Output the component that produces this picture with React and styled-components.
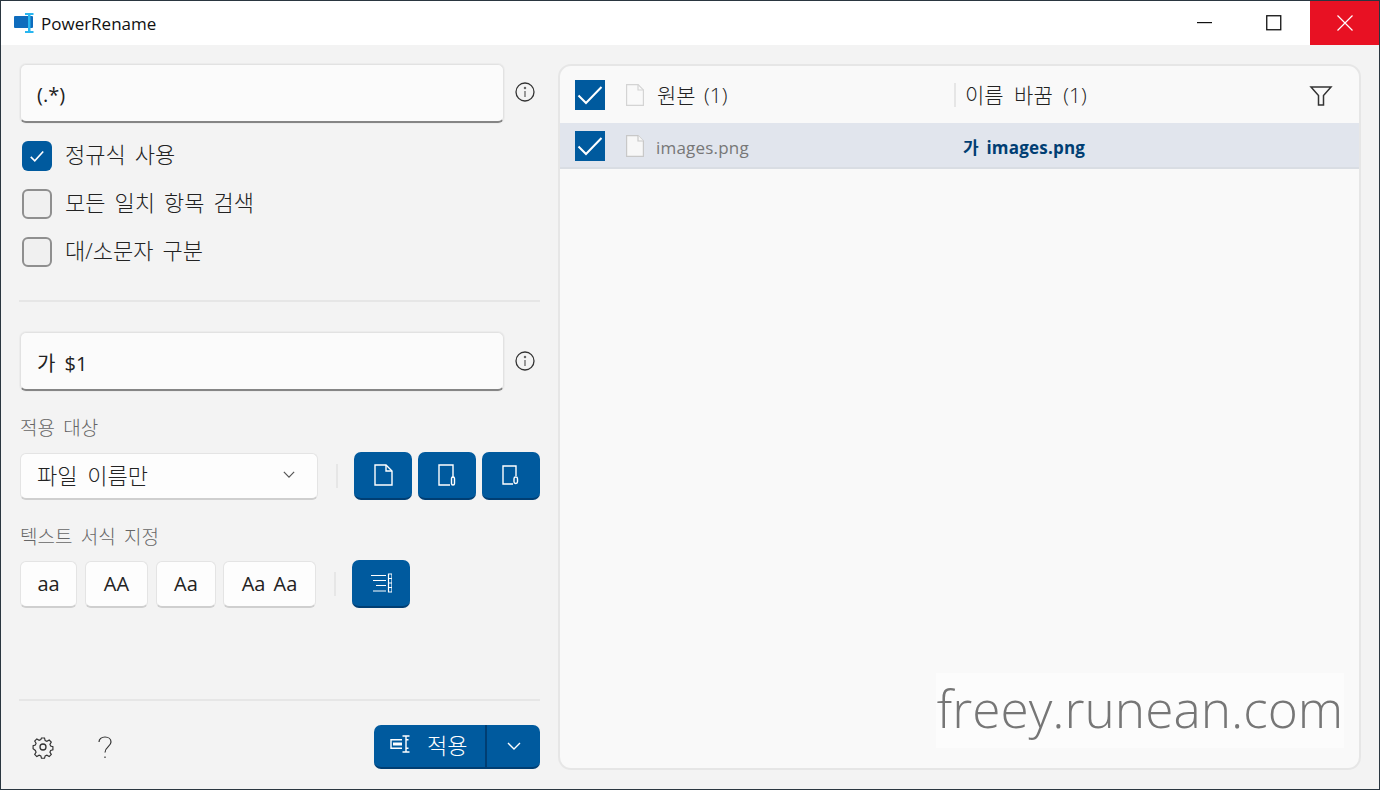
import React from "react";
import styled, { createGlobalStyle } from "styled-components";

const Global = createGlobalStyle`
  html, body { margin: 0; padding: 0; background: #f3f3f3; }
  * { box-sizing: border-box; }
  body { font-family: "Open Sans", "Noto Sans CJK KR", sans-serif; color: #1b1b1b; overflow: hidden; }
`;

const Win = styled.div`
  width: 1380px; height: 790px; display: flex; flex-direction: column;
  border: 1px solid #2a3640; background: #f3f3f3;
`;
const TitleBar = styled.header`
  height: 44px; flex: none; background: #fff; display: flex; align-items: center; padding-left: 12px;
`;
const AppTitle = styled.span`
  font-size: 17px; margin-left: 6px; flex: 1; color: #111; line-height: 44px; margin-top: 1px;
`;
const WinBtn = styled.div`
  width: ${p => p.$w}px; height: 44px; display: flex; align-items: center; justify-content: center;
  padding-right: ${p => p.$pad || 0}px;
  background: ${p => p.$close ? "#e81123" : "transparent"};
`;
const Main = styled.main`flex: 1; display: flex; min-height: 0;`;
const Left = styled.section`
  width: 557px; padding: 19px 0 20px 19px; display: flex; flex-direction: column; flex: none;
`;
const InputRow = styled.div`display: flex; align-items: flex-start;`;
const Field = styled.div`
  width: 484px; height: 59px; background: #fbfbfb; border: 1px solid #e2e2e2; border-bottom: 2px solid #858585;
  border-radius: 6px; display: flex; align-items: center; padding: 2px 0 0 16px; font-size: 20px; color: #222;
  word-spacing: 4px;
  box-shadow: 0 0 0 1px #ececec;
`;
const InfoWrap = styled.div`width: 20px; margin: ${p => p.$top}px 0 0 11px; height: 20px;`;
const Checks = styled.div`margin: 8px 0 0 2px;`;
const CheckRow = styled.label`
  display: flex; align-items: center; height: 48px; font-size: 22px; word-spacing: 3.300px; color: #222; font-weight: 300;
`;
const CheckText = styled.span`margin-bottom: 4px;`;
const CheckBox = styled.span`
  width: 30px; height: 30px; border-radius: 6px; flex: none; margin: 2px 13px 0 0; display: flex; align-items: center; justify-content: center;
  background: ${p => p.$on ? "#005a9e" : "#f0f0f0"};
  border: ${p => p.$on ? "none" : "2px solid #8f8f8f"};
`;
const Divider = styled.div`
  height: 2px; width: 521px; margin-left: -1px; background: #e6e6e6; flex: none;
  margin-top: ${p => p.$auto ? "auto" : `${p.$top || 0}px`}; margin-bottom: ${p => p.$bottom || 0}px;
`;
const Label = styled.div`
  font-size: 19px; height: 20px; line-height: 20px; color: #666; margin-top: 27px; word-spacing: 3.400px; font-weight: 300;
`;
const ToolRow = styled.div`display: flex; align-items: center; height: 48px; margin-top: ${p => p.$top}px;`;
const Dropdown = styled.div`
  width: 298px; height: 47px; background: #fdfdfd; border: 1px solid #e4e4e4; border-bottom: 2px solid #cfcfcf; border-radius: 6px;
  display: flex; align-items: center; justify-content: space-between; padding: 0 22px 3px 16px;
  font-size: 22px; word-spacing: 4px; color: #222; font-weight: 300;
`;
const Sep = styled.div`width: 2px; height: 24px; background: #e6e6e6; margin: 0 ${p => p.$r}px 0 ${p => p.$l}px; flex: none;`;
const Primary = styled.div`
  width: 58px; height: 48px; border-radius: 7px; background: #005a9e; border-bottom: 2px solid #003e73;
  display: flex; align-items: center; justify-content: center; margin-right: ${p => p.$gap || 0}px; flex: none;
`;
const Case = styled.div`
  width: ${p => p.$w}px; height: 47px; background: #fdfdfd; border: 1px solid #e4e4e4; border-bottom: 2px solid #cfcfcf; border-radius: 6px;
  display: flex; align-items: center; justify-content: center; margin-right: ${p => p.$gap || 0}px; flex: none;
  font-size: 20px; color: #222; word-spacing: 3px;
`;
const Footer = styled.div`
  height: 44px; display: flex; align-items: center; justify-content: space-between; width: 520px;
`;
const FootIcons = styled.div`display: flex; align-items: center; margin-left: 11px; gap: 38px;`;
const IconSlot = styled.span`width: 24px; height: 24px; display: flex; align-items: center; justify-content: center;`;
const Apply = styled.div`
  width: 166px; height: 44px; border-radius: 7px; background: #005a9e; border-bottom: 2px solid #003e73; display: flex; color: #fff;
`;
const ApplyMain = styled.div`
  width: 113px; display: flex; align-items: center; padding: 0 0 4px 16px; gap: 15px; border-right: 2px solid #003e73;
  font-size: 22px; font-weight: 300;
`;
const ApplyArrow = styled.div`flex: 1; display: flex; align-items: center; justify-content: center;`;
const Panel = styled.section`
  position: relative; width: 803px; margin: 19px 0 19px 0; background: #f9f9f9; border: 2px solid #e6e6e6; border-radius: 13px; overflow: hidden;
`;
const HeadRow = styled.div`
  height: 57px; display: flex; align-items: center; padding: 1px 0 0 15px;
`;
const FileRow = styled.div`
  height: 46px; display: flex; align-items: center; padding: 2px 0 0 15px; background: #e1e5ed; border-bottom: 2px solid #d9dde3;
`;
const GridCheck = styled.span`
  width: 30px; height: 30px; background: #005a9e; flex: none; display: flex; align-items: center; justify-content: center;
`;
const DocSlot = styled.span`width: 18px; height: 22px; margin: 0 12px 0 21px; flex: none; display: flex;`;
const OrigHead = styled.span`
  width: 298px; flex: none; font-size: 21px; color: #222; font-weight: 300; word-spacing: 3px; padding: 0 0 2px 1px;
`;
const OrigName = styled.span`
  width: 298px; flex: none; font-size: 17px; color: #777; letter-spacing: 0.2px; padding-top: 2px;
`;
const HeadSep = styled.span`width: 2px; height: 24px; background: #e6e6e6; flex: none;`;
const RenamedHead = styled.span`
  flex: 1; margin-left: 9px; font-size: 21px; font-weight: 300; color: #222; word-spacing: 5px; padding-bottom: 2px;
`;
const RenamedName = styled.span`
  flex: 1; margin-left: 9px; font-size: 17px; font-weight: 700; color: #003e73; word-spacing: 3px; letter-spacing: 0.2px;
`;
const FilterSlot = styled.span`width: 24px; height: 24px; margin-right: 26px; display: flex;`;
const Watermark = styled.div`
  position: absolute; left: 376px; top: 607px; width: 408px; height: 75px; background: #fcfcfc;
  font-size: 51.400px; font-weight: 300; color: #767676; display: flex; align-items: center; justify-content: center; line-height: 75px;
  padding-bottom: 4px;
`;

const Check = ({ s = 18 }) => (
  <svg width={s} height={s} viewBox="0 0 18 18" fill="none" stroke="#fff" strokeWidth="1.800"><path d="M2 10l4.500 4.500L16 4" /></svg>
);
const BigCheck = () => (
  <svg width="26" height="20" viewBox="0 0 26 20" fill="none" stroke="#fff" strokeWidth="2"><path d="M1.500 10.500l7.500 7.500L24.500 2" /></svg>
);
const Info = () => (
  <svg width="20" height="20" viewBox="0 0 20 20" fill="none" stroke="#333" strokeWidth="1.300">
    <circle cx="10" cy="10" r="9" /><path d="M10 9v6" stroke="#666" /><circle cx="10" cy="6" r="0.6" fill="#666" stroke="#666" />
  </svg>
);
const Chevron = ({ c = "#555", w = 12, h = 7 }) => (
  <svg width={w} height={h} viewBox="0 0 14 8" fill="none" stroke={c} strokeWidth="1.400"><path d="M1 1l6 6 6-6" /></svg>
);
const Doc = ({ c = "#d4d4d4", f = "none" }) => (
  <svg width="18" height="22" viewBox="0 0 18 22" fill={f} stroke={c} strokeWidth="1.200">
    <path d="M.6.6h11.500l5.300 5.300v15.500H.6z" /><path d="M12 .6v5.400h5.400" />
  </svg>
);
const AppIcon = () => (
  <svg width="22" height="22" viewBox="0 0 22 22">
    <rect x="1" y="4" width="19" height="12" rx="1" fill="#0f6cbd" />
    <rect x="15" y="2" width="2.500" height="18" fill="#29b6f0" />
    <rect x="12" y="1" width="8.500" height="2" fill="#29b6f0" />
    <rect x="12" y="19" width="8.500" height="2" fill="#29b6f0" />
  </svg>
);

export default function App() {
  return (
    <>
      <Global />
      <Win>
        <TitleBar>
          <AppIcon />
          <AppTitle>PowerRename</AppTitle>
          <WinBtn $w={69}><svg width="16" height="2"><rect width="15" height="1.200" fill="#111" /></svg></WinBtn>
          <WinBtn $w={71} $pad={2}><svg width="16" height="16" fill="none"><rect x=".75" y=".75" width="14" height="14" stroke="#111" strokeWidth="1.300" /></svg></WinBtn>
          <WinBtn $w={69} $close><svg width="16" height="16" fill="none" stroke="#fff" strokeWidth="1.200"><path d="M.5.5l15 15M15.500.5l-15 15" /></svg></WinBtn>
        </TitleBar>
        <Main>
          <Left>
            <InputRow><Field>(.*)</Field><InfoWrap $top={18}><Info /></InfoWrap></InputRow>
            <Checks>
              <CheckRow><CheckBox $on><Check s={16} /></CheckBox><CheckText>정규식 사용</CheckText></CheckRow>
              <CheckRow><CheckBox /><CheckText>모든 일치 항목 검색</CheckText></CheckRow>
              <CheckRow><CheckBox /><CheckText>대/소문자 구분</CheckText></CheckRow>
            </Checks>
            <Divider $top={25} $bottom={30} />
            <InputRow><Field>가 $1</Field><InfoWrap $top={19}><Info /></InfoWrap></InputRow>
            <Label>적용 대상</Label>
            <ToolRow $top={14}>
              <Dropdown>파일 이름만<Chevron /></Dropdown>
              <Sep $l={18} $r={16} />
              <Primary $gap={6}>
                <svg width="19" height="22" viewBox="0 0 19 22" fill="none" stroke="#fff" strokeWidth="1.400"><path d="M1 1h11l6 6v14H1z" /><path d="M12 1v6h6" /></svg>
              </Primary>
              <Primary $gap={6}>
                <svg width="18" height="22" viewBox="0 0 18 22" fill="none" stroke="#fff" strokeWidth="1.400"><path d="M15 14V1H1v20h11" /><rect x="13.500" y="13" width="3" height="8" rx="1.500" /></svg>
              </Primary>
              <Primary>
                <svg width="18" height="20" viewBox="0 0 18 20" fill="none" stroke="#fff" strokeWidth="1.400"><path d="M14 11V1H1v18h10" /><rect x="12" y="12" width="3.500" height="6.500" rx="1.700" /></svg>
              </Primary>
            </ToolRow>
            <Label>텍스트 서식 지정</Label>
            <ToolRow $top={13}>
              <Case $w={57} $gap={8}>aa</Case>
              <Case $w={63} $gap={8}>AA</Case>
              <Case $w={60} $gap={7}>Aa</Case>
              <Case $w={93}>Aa Aa</Case>
              <Sep $l={18} $r={16} />
              <Primary>
                <svg width="22" height="20" viewBox="0 0 22 20" fill="none" stroke="#fff" strokeWidth="1.200">
                  <path d="M1 2.500h15M3 7.500h13M6 12.500h10M3 18h13" />
                  <path d="M18.500 1h3.500v18h-3.500zM18.500 5.500h3.500M18.500 10h3.500M18.500 14.500h3.500" />
                </svg>
              </Primary>
            </ToolRow>
            <Divider $auto $bottom={24} />
            <Footer>
              <FootIcons>
                <IconSlot>
                  <svg width="24" height="24" viewBox="0 0 24 24" fill="none" stroke="#333" strokeWidth="1.300">
                    <circle cx="12" cy="12" r="3" />
                    <path d="M10.300 2h3.400l.7 2.900 1.900.8 2.600-1.500 2.300 2.400-1.500 2.500.8 1.900 2.500.7v3.400l-2.500.7-.8 1.900 1.500 2.500-2.300 2.400-2.600-1.500-1.900.8-.7 2.600h-3.400l-.7-2.600-1.900-.8-2.600 1.500-2.300-2.400 1.500-2.500-.8-1.900L1 13.900v-3.400l2.500-.7.8-1.900-1.500-2.500 2.300-2.400 2.600 1.500 1.900-.8z" transform="translate(1.200 1.200) scale(.9)" />
                  </svg>
                </IconSlot>
                <IconSlot>
                  <svg width="14" height="23" viewBox="0 0 14 23" fill="none" stroke="#333" strokeWidth="1.200">
                    <path d="M1 6c0-3 2.500-5 6-5s6 2 6 5c0 4.500-6 5-6 10.500" /><path d="M7 20.500v1.500" />
                  </svg>
                </IconSlot>
              </FootIcons>
              <Apply>
                <ApplyMain>
                  <svg width="22" height="18" viewBox="0 0 22 18" fill="none" stroke="#fff" strokeWidth="1.400">
                    <path d="M12 4.700H1v8.600h11" /><path d="M3 9h9" strokeWidth="3" />
                    <path d="M16 1v16M12.500 1h7M12.500 17h7M16 4.700h2.500M16 13.300h2.500" />
                  </svg>
                  적용
                </ApplyMain>
                <ApplyArrow><Chevron c="#fff" w={14} h={8} /></ApplyArrow>
              </Apply>
            </Footer>
          </Left>
          <Panel>
            <HeadRow>
              <GridCheck><BigCheck /></GridCheck>
              <DocSlot><Doc /></DocSlot>
              <OrigHead>원본 (1)</OrigHead>
              <HeadSep />
              <RenamedHead>이름 바꿈 (1)</RenamedHead>
              <FilterSlot>
                <svg width="24" height="24" viewBox="0 0 24 24" fill="none" stroke="#333" strokeWidth="1.500">
                  <path d="M2 4h20l-7.500 8.500V22h-5v-9.500z" />
                </svg>
              </FilterSlot>
            </HeadRow>
            <FileRow>
              <GridCheck><BigCheck /></GridCheck>
              <DocSlot><Doc f="#f7f7f7" c="#c8c8c8" /></DocSlot>
              <OrigName>images.png</OrigName>
              <RenamedName>가 images.png</RenamedName>
            </FileRow>
            <Watermark>freey.runean.com</Watermark>
          </Panel>
        </Main>
      </Win>
    </>
  );
}
